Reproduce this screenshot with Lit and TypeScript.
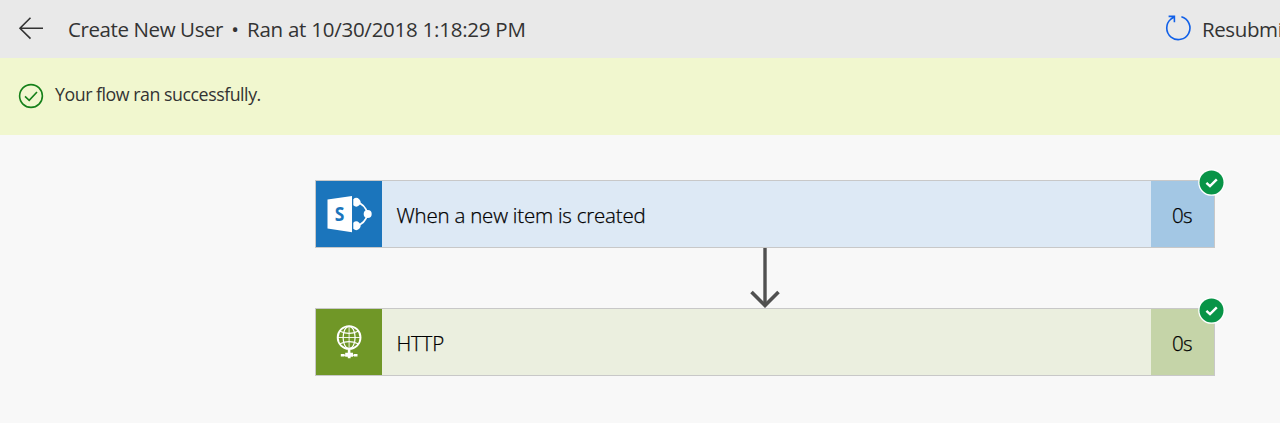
import { LitElement, html, css, svg } from "lit";
import { customElement, property } from "lit/decorators.js";

const sharePointIcon = svg`
  <path d="M11.5 18.4L36 15V51.2L11.5 47.5Z" fill="#fff"/>
  <path d="M40.5 21.3C46.5 22.3 50.2 27 51.7 33C50.2 38.5 46.5 43.5 40.5 44.7" fill="none" stroke="#fff" stroke-width="1.7"/>
  <path d="M37.3 18.3A4.2 4.2 0 1 1 37.3 24.3ZM37.3 41.7A4.2 4.2 0 1 1 37.3 47.7Z" fill="#fff"/>
  <circle cx="51.7" cy="33" r="4" fill="#fff"/>`;

const httpIcon = svg`
  <g fill="none" stroke="#fff">
    <circle cx="33.1" cy="28.5" r="11.4" stroke-width="1.9"/>
    <ellipse cx="33.1" cy="28.5" rx="6" ry="11.2" stroke-width="1.2"/>
    <path d="M33.1 17.1V40M21.6 28.5H44.5" stroke-width="0.9"/>
    <path d="M24 22.2Q33 26.6 42 22.2M24 34.8Q33 30.6 42 34.8" stroke-width="1.2"/>
    <path d="M33.1 40V44" stroke-width="2.6"/>
  </g>
  <path d="M24.8 44.9h3.7v2.6h-3.7zM28.5 45.7h1v1h-1zM29.2 43.8h7.8v3.9h-7.8zM31.8 47.7h2.8v1.6h-2.8zM37 45.7h1v1h-1zM37.8 44.9h3.7v2.6h-3.7z" fill="#fff"/>`;

@customElement("flow-step")
export class FlowStep extends LitElement {
  @property() label = "";
  @property() duration = "";
  @property() kind = "sharepoint";

  static styles = css`
    :host { display: block; width: 900px; }
    .card {
      position: relative; box-sizing: border-box; height: 68px;
      display: flex; border: 1px solid #c8c8c8; color: #000;
      font-size: 20.5px; font-weight: 300; -webkit-text-stroke: 0.25px #000;
    }
    .tile { width: 66px; height: 66px; flex: none; background: #1b75bc; -webkit-text-stroke: 0; }
    .tile svg { display: block; }
    .glyph { font: 700 19.3px "Open Sans", sans-serif; fill: #1b75bc; }
    .label { flex: 1; display: flex; align-items: center; padding: 1px 0 0 14.5px; background: #dde9f5; white-space: nowrap; }
    .time { width: 63px; box-sizing: border-box; display: flex; align-items: center; justify-content: center; padding: 1px 1px 0 0; background: #a3c7e4; letter-spacing: -0.6px; }
    .name { letter-spacing: -0.22px; }
    .http .tile { background: #709727; }
    .http .label { background: #ebefdf; }
    .http .time { background: #c5d4a8; }
    .http .name { letter-spacing: -0.2px; }
    .badge { position: absolute; right: -11px; top: -12px; display: block; }
  `;

  render() {
    const http = this.kind === "http";
    return html`
      <div class="card ${this.kind}">
        <div class="tile">
          <svg width="66" height="66" viewBox="0 0 66 66">
            ${http ? httpIcon : sharePointIcon}
            ${http ? "" : svg`<text class="glyph" x="18.8" y="39.6" textLength="9.6" lengthAdjust="spacingAndGlyphs">S</text>`}
          </svg>
        </div>
        <div class="label"><span class="name">${this.label}</span></div>
        <div class="time">${this.duration}</div>
        <svg class="badge" width="27" height="27" viewBox="0 0 27 27">
          <circle cx="13.5" cy="13.5" r="13.3" fill="#fff"/>
          <circle cx="13.5" cy="13.5" r="12" fill="#089447"/>
          <path d="M8.4 13.8L12 17.2L18.8 10.4" fill="none" stroke="#fff" stroke-width="2.4"/>
        </svg>
      </div>`;
  }
}

@customElement("app-root")
export class AppRoot extends LitElement {
  static styles = css`
    :host {
      display: flex; flex-direction: column; height: 423px; overflow: hidden;
      background: #f8f8f8; color: #333;
      font-family: "Open Sans", "Noto Sans", sans-serif;
    }
    svg { display: block; flex: none; }
    header {
      height: 58px; box-sizing: border-box; flex: none; display: flex; align-items: center;
      padding-left: 18px; background: #e9e9e9; font-size: 20.5px; white-space: nowrap;
    }
    .title { display: flex; margin-left: 24px; }
    .flow { width: 155px; letter-spacing: -0.4px; }
    .dot { width: 24px; text-align: center; }
    .ran { letter-spacing: -0.25px; }
    .resubmit { width: 115px; margin-left: auto; display: flex; align-items: center; overflow: hidden; }
    .resubmit span { margin-left: 10px; letter-spacing: -0.4px; }
    .banner {
      height: 77px; box-sizing: border-box; flex: none; display: flex; align-items: center;
      padding: 0 0 1px 18px; background: #f1f7cf; font-size: 17.8px;
    }
    .banner span { margin-left: 11px; padding-bottom: 4px; letter-spacing: -0.47px; }
    main { flex: 1; display: flex; flex-direction: column; align-items: center; padding: 45px 0 0 250px; }
  `;

  render() {
    return html`
      <header>
        <svg width="26" height="24" viewBox="0 0 26 24" fill="none" stroke="#333" stroke-width="1.6">
          <path d="M25 11.2H2M12.5 0.8L2 11.2L12.5 21.6"/>
        </svg>
        <div class="title">
          <span class="flow">Create New User</span><span class="dot">•</span><span class="ran">Ran at 10/30/2018 1:18:29 PM</span>
        </div>
        <div class="resubmit">
          <svg width="27" height="28" viewBox="0 0 27 28" fill="none" stroke="#1160e8" stroke-width="1.6">
            <path d="M16.4 1.8A11.6 11.6 0 1 1 6 4L9.2 1.8M3.6 1.4H9.4V7.2"/>
          </svg>
          <span>Resubmit</span>
        </div>
      </header>
      <section class="banner">
        <svg width="26" height="26" viewBox="0 0 26 26" fill="none" stroke="#15801a" stroke-width="1.6">
          <circle cx="13" cy="13" r="11.4"/><path d="M7 13.4L11.2 17.3L19 9"/>
        </svg>
        <span>Your flow ran successfully.</span>
      </section>
      <main>
        <flow-step label="When a new item is created" duration="0s" kind="sharepoint"></flow-step>
        <svg width="30" height="60" viewBox="0 0 30 60" fill="none" stroke="#505050">
          <path d="M15 0V57" stroke-width="3.4"/><path d="M1.5 44L15 57.5L28.5 44" stroke-width="3.6"/>
        </svg>
        <flow-step label="HTTP" duration="0s" kind="http"></flow-step>
      </main>`;
  }
}
